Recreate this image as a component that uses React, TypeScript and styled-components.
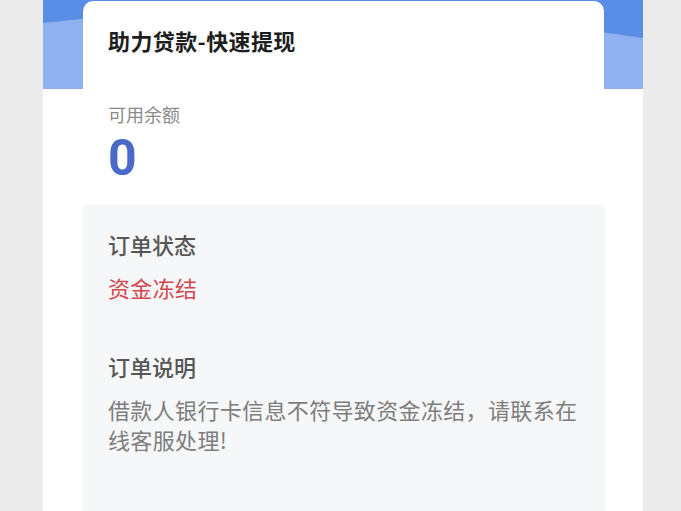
import React from 'react'
import styled, { createGlobalStyle } from 'styled-components'

const GlobalStyle = createGlobalStyle`
  html, body {
    margin: 0;
    padding: 0;
    background: #ebebeb;
  }
  body {
    font-family: 'Noto Sans CJK SC', 'Noto Sans', sans-serif;
  }
`

const Column = styled.div`
  width: 600px;
  height: 511px;
  margin-left: 43px;
  background: #ffffff;
  overflow: hidden;
`

const Header = styled.div`
  height: 89px;
  background: #5a8de6;
  line-height: 0;
`

const Card = styled.div`
  position: relative;
  margin: -88px 39px 0 40px;
  background: #ffffff;
  border-radius: 10px 10px 0 0;
`

const Top = styled.div`
  padding: 24px 25px 22px;
  display: flex;
  flex-direction: column;
`

const Title = styled.div`
  font-size: 22px;
  line-height: 30px;
  font-weight: 700;
  letter-spacing: 0.4px;
  color: #1e1e1e;
  margin-bottom: 46px;
`

const BalanceLabel = styled.div`
  font-size: 18px;
  line-height: 26px;
  color: #8a8a8a;
  margin-bottom: 6px;
`

const Balance = styled.div`
  font-family: Roboto, 'Liberation Sans', sans-serif;
  font-size: 50px;
  line-height: 50px;
  font-weight: 700;
  color: #4a69c9;
`

const Panel = styled.div`
  background: #f6f7f9;
  padding: 24px 25px 80px;
  display: flex;
  flex-direction: column;
  box-shadow: 0 0 4px rgba(0, 0, 0, 0.03);
`

const Field = styled.div<{ gap?: number }>`
  display: flex;
  flex-direction: column;
  gap: 13px;
  margin-top: ${({ gap }) => gap ?? 0}px;
`

const Label = styled.div`
  font-size: 22px;
  line-height: 30px;
  font-weight: 500;
  color: #565656;
`

const Value = styled.div<{ tone?: 'alert' | 'plain' }>`
  font-size: 22px;
  line-height: 30px;
  letter-spacing: 0.35px;
  color: ${({ tone }) => (tone === 'alert' ? '#d4474e' : '#7d7d7d')};
`

const Wave = () => (
  <svg width="600" height="89" viewBox="0 0 600 89">
    <path d="M0 23 Q280 -10 600 38 L600 89 L0 89 Z" fill="#8fb1ef" />
  </svg>
)

export default function App() {
  return (
    <>
      <GlobalStyle />
      <Column>
        <Header>
          <Wave />
        </Header>
        <Card>
          <Top>
            <Title>助力贷款-快速提现</Title>
            <BalanceLabel>可用余额</BalanceLabel>
            <Balance>0</Balance>
          </Top>
          <Panel>
            <Field>
              <Label>订单状态</Label>
              <Value tone="alert">资金冻结</Value>
            </Field>
            <Field gap={49}>
              <Label>订单说明</Label>
              <Value>借款人银行卡信息不符导致资金冻结，请联系在线客服处理!</Value>
            </Field>
          </Panel>
        </Card>
      </Column>
    </>
  )
}
